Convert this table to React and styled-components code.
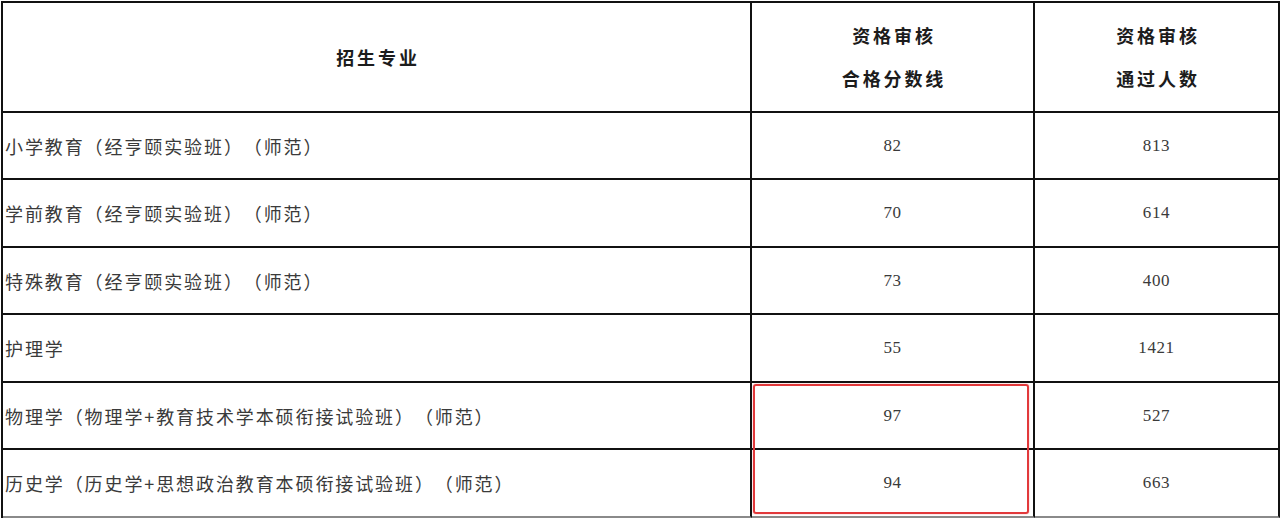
import React from "react";
import styled, { createGlobalStyle } from "styled-components";

const GlobalStyle = createGlobalStyle`
  html, body {
    margin: 0;
    padding: 0;
    background: #ffffff;
  }
  body {
    font-family: "Noto Sans CJK SC", "Noto Sans", sans-serif;
    text-spacing-trim: space-all;
  }
`;

const rows = [
  { name: "小学教育（经亨颐实验班）（师范）", score: 82, count: 813 },
  { name: "学前教育（经亨颐实验班）（师范）", score: 70, count: 614 },
  { name: "特殊教育（经亨颐实验班）（师范）", score: 73, count: 400 },
  { name: "护理学", score: 55, count: 1421 },
  { name: "物理学（物理学+教育技术学本硕衔接试验班）（师范）", score: 97, count: 527 },
  { name: "历史学（历史学+思想政治教育本硕衔接试验班）（师范）", score: 94, count: 663 },
];

// alternate 67 / 68 px rows, like the scanned sheet
const rowHeights = [67, 68, 67, 68, 67, 68];

const Page = styled.div`
  position: relative;
  width: 1280px;
  height: 518px;
  padding: 1px 0 0 1px;
  box-sizing: border-box;
  background: #fff;
  overflow: hidden;
`;

const Sheet = styled.div`
  display: grid;
  grid-template-columns: 749px 283px 245px;
  grid-template-rows: 110px ${rowHeights.map((h) => `${h}px`).join(" ")};
  border-top: 2px solid #111;
  border-left: 2px solid #111;
`;

const Cell = styled.div`
  box-sizing: border-box;
  display: flex;
  align-items: center;
  justify-content: ${(p) => (p.$left ? "flex-start" : "center")};
  padding-left: ${(p) => (p.$left ? "2px" : "0")};
  border-right: 2px solid #111;
  border-bottom: 2px solid ${(p) => (p.$last ? "#8a8a8a" : "#111")};
`;

const HeadText = styled.div`
  font-weight: 700;
  font-size: 18px;
  letter-spacing: 2.9px;
  color: #1c1c1c;
  line-height: 43px;
  text-align: center;
  padding-left: 3px;
`;

const NameText = styled.span`
  font-size: 18px;
  letter-spacing: 1.9px;
  color: #3a3a3a;
  white-space: nowrap;
  text-spacing-trim: space-all;
`;

const Num = styled.span`
  font-family: "Liberation Serif", "DejaVu Serif", serif;
  font-size: 17px;
  letter-spacing: 0.6px;
  color: #3a3a3a;
`;

const Highlight = styled.div`
  position: absolute;
  left: 753px;
  top: 384px;
  width: 276px;
  height: 130px;
  box-sizing: border-box;
  border: 2.5px solid #e2393b;
  border-radius: 3px;
  box-shadow: 0 0 1.5px rgba(226, 57, 59, 0.55);
  pointer-events: none;
`;

export default function App() {
  return (
    <Page>
      <GlobalStyle />
      <Sheet>
        <Cell>
          <HeadText>招生专业</HeadText>
        </Cell>
        <Cell>
          <HeadText>
            资格审核
            <br />
            合格分数线
          </HeadText>
        </Cell>
        <Cell>
          <HeadText>
            资格审核
            <br />
            通过人数
          </HeadText>
        </Cell>
        {rows.map((r, i) => {
          const last = i === rows.length - 1;
          return (
            <React.Fragment key={r.name}>
              <Cell $left $last={last}>
                <NameText>{r.name}</NameText>
              </Cell>
              <Cell $last={last}>
                <Num>{r.score}</Num>
              </Cell>
              <Cell $last={last}>
                <Num>{r.count}</Num>
              </Cell>
            </React.Fragment>
          );
        })}
      </Sheet>
      <Highlight />
    </Page>
  );
}
